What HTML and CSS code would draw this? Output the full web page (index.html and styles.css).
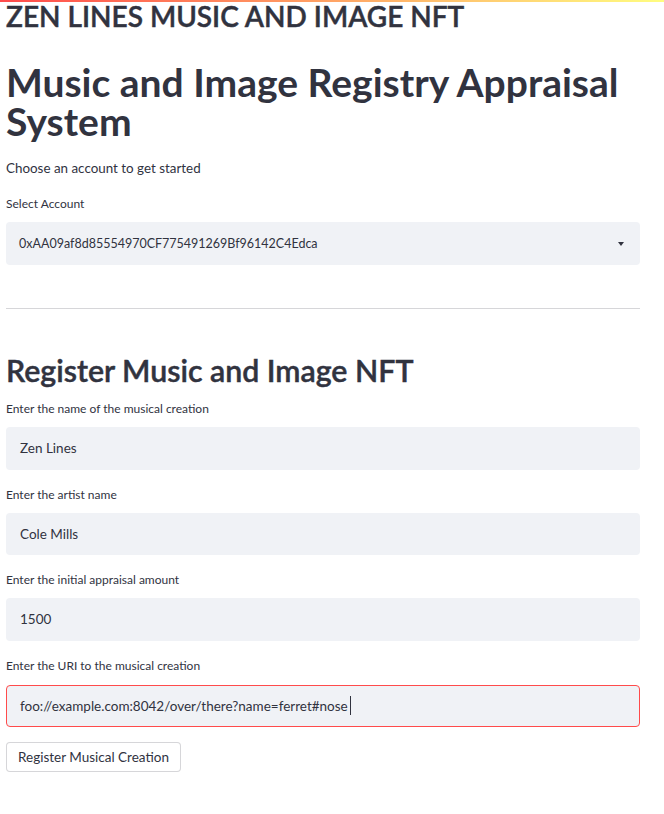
FILE: index.html
```html
<!DOCTYPE html>
<html lang="en">
<head>
<meta charset="utf-8">
<title>Zen Lines Music and Image NFT</title>
<link rel="stylesheet" href="styles.css">
</head>
<body>
<div class="decoration"></div>
<main class="app">
  <h2 class="page-title">ZEN LINES MUSIC AND IMAGE NFT</h2>
  <h1 class="main-title">Music and Image Registry Appraisal System</h1>
  <p class="intro">Choose an account to get started</p>

  <div class="field">
    <div class="label">Select Account</div>
    <div class="select">
      <span class="value">0xAA09af8d85554970CF775491269Bf96142C4Edca</span>
      <span class="arrow"></span>
    </div>
  </div>

  <hr class="divider">

  <h2 class="section-title">Register Music and Image NFT</h2>

  <div class="field">
    <div class="label">Enter the name of the musical creation</div>
    <div class="input">Zen Lines</div>
  </div>
  <div class="field">
    <div class="label">Enter the artist name</div>
    <div class="input">Cole Mills</div>
  </div>
  <div class="field">
    <div class="label">Enter the initial appraisal amount</div>
    <div class="input">1500</div>
  </div>
  <div class="field last">
    <div class="label">Enter the URI to the musical creation</div>
    <div class="input focused">foo://example.com:8042/over/there?name=ferret#nose<span class="caret"></span></div>
  </div>

  <button class="btn" type="button">Register Musical Creation</button>
</main>
</body>
</html>
```

FILE: styles.css
```css
* { box-sizing: border-box; }

html, body {
  margin: 0;
  padding: 0;
  background: #ffffff;
}

body {
  font-family: "Lato", "Noto Sans", sans-serif;
  color: #31333f;
}

.decoration {
  position: fixed;
  top: 0;
  left: 0;
  right: 0;
  height: 2px;
  background: linear-gradient(90deg, #ff4b4b, #fffd80);
  z-index: 10;
}

.app {
  width: 634px;
  margin-left: 6px;
  display: flex;
  flex-direction: column;
}

.page-title {
  margin: -1px 0 0;
  font-size: 28px;
  line-height: 34px;
  font-weight: 600;
  -webkit-text-stroke: 0.45px #31333f;
}

.main-title {
  margin: 30px 0 0;
  font-size: 39px;
  line-height: 39px;
  font-weight: 700;
}

.intro {
  margin: 17px 0 0;
  font-size: 13.4px;
  line-height: 20px;
}

.field {
  display: flex;
  flex-direction: column;
  margin-top: 18px;
}

.label {
  font-size: 12px;
  line-height: 16px;
  margin-bottom: 10px;
}

.select {
  height: 43px;
  background: #f0f2f6;
  border-radius: 4px;
  display: flex;
  align-items: center;
  justify-content: space-between;
  padding: 0 16px 0 13px;
  font-size: 12.5px;
}

.arrow {
  width: 0;
  height: 0;
  border-left: 3.5px solid transparent;
  border-right: 3.5px solid transparent;
  border-top: 4px solid #31333f;
}

.divider {
  margin: 43px 0 0;
  border: 0;
  border-top: 1px solid #d6d6d9;
  height: 0;
}

.section-title {
  margin: 43px 0 0;
  font-size: 30.3px;
  line-height: 36px;
  font-weight: 600;
  -webkit-text-stroke: 0.45px #31333f;
}

.section-title + .field { margin-top: 13px; }

.field + .field { margin-top: 17px; }

.input {
  height: 42.5px;
  background: #f0f2f6;
  border: 1px solid transparent;
  border-radius: 4px;
  display: flex;
  align-items: center;
  padding: 0 13px;
  font-size: 13.5px;
}

.input.focused {
  border-color: #ff4b4b;
}

.caret {
  display: inline-block;
  width: 1px;
  height: 19px;
  background: #31333f;
  margin-left: 2px;
}

.field.last .label { margin-bottom: 11px; }

.btn {
  align-self: flex-start;
  margin-top: 15px;
  height: 30px;
  padding: 0 11px;
  background: #ffffff;
  border: 1px solid rgba(49, 51, 63, 0.2);
  border-radius: 4px;
  font-family: inherit;
  font-size: 13.5px;
  color: #31333f;
}
```
